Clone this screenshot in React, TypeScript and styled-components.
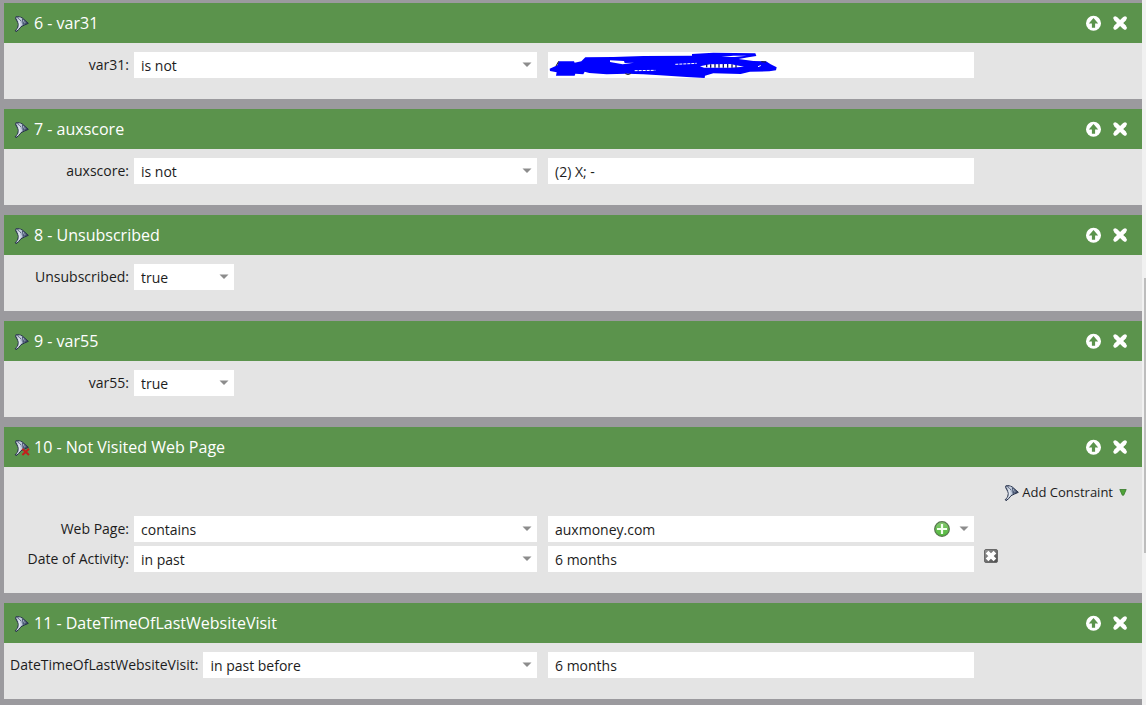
import React, { useId } from 'react';
import styled, { createGlobalStyle } from 'styled-components';

const GlobalStyle = createGlobalStyle`
  *, *::before, *::after { box-sizing: border-box; }
  body {
    margin: 0;
    background: #9b9a9e;
    color: #1c1c1c;
    font-family: 'Open Sans', 'Noto Sans', sans-serif;
    font-size: 14px;
  }
  button, input, select { font: inherit; color: inherit; }
`;

const Page = styled.div`
  display: flex;
  min-height: 100vh;
`;

const FilterList = styled.main`
  flex: 1;
  min-width: 0;
  display: flex;
  flex-direction: column;
  gap: 10px;
  padding: 3px 0 6px 4px;
`;

const ScrollTrack = styled.div`
  width: 4px;
  display: flex;
  flex-direction: column;
  align-items: flex-end;
  background: #f1f1f1;
`;

const TrackSpace = styled.div<{ $share: number }>`
  flex: ${(p) => p.$share} 1 0;
`;

const Thumb = styled.div`
  flex: 275 1 0;
  width: 2px;
  background: #bdbdbd;
`;

const Card = styled.section`
  background: #e4e4e4;
`;

const CardHeader = styled.header`
  display: flex;
  align-items: center;
  gap: 4px;
  height: 40px;
  padding: 0 14px 0 10px;
  background: #5b934c;
  color: #fff;
`;

const CardTitle = styled.h2`
  flex: 1;
  margin: 0;
  font-size: 16px;
  font-weight: 400;
  line-height: 22px;
`;

const CardActions = styled.div`
  display: flex;
  gap: 11px;
`;

const IconButton = styled.button`
  display: flex;
  padding: 0;
  border: 0;
  background: none;
  cursor: pointer;
`;

const RemoveButton = styled(IconButton)`
  align-self: flex-start;
  margin: 3px 0 0 -1px;
`;

const CardBody = styled.div`
  display: flex;
  flex-direction: column;
  gap: 4px;
  padding: 9px 0 21px 6px;
`;

const ConstraintBar = styled.div`
  display: flex;
  justify-content: flex-end;
  height: 36px;
  padding: 6px 15px 0 0;
`;

const ConstraintButton = styled.button`
  display: flex;
  align-items: center;
  gap: 2px;
  height: 20px;
  padding: 0;
  border: 0;
  background: none;
  font-size: 13px;
  line-height: 18px;
  cursor: pointer;

  svg:last-child { margin-left: 4px; }
`;

const Row = styled.div`
  display: flex;
  align-items: center;
  gap: 11px;
`;

const Criterion = styled.div`
  display: flex;
  gap: 5px;
  width: 527px;
`;

const Label = styled.label`
  min-width: 119px;
  line-height: 26px;
  text-align: right;
  white-space: nowrap;
`;

const Overlay = styled.div<{ $width?: number }>`
  display: grid;
  align-items: center;
  height: 26px;
  min-width: 0;
  ${(p) => (p.$width ? `width: ${p.$width}px;` : 'flex: 1;')}

  > * { grid-area: 1 / 1; }
`;

const Select = styled.select`
  appearance: none;
  width: 100%;
  height: 26px;
  padding: 0 20px 0 7px;
  border: 0;
  border-radius: 0;
  background: #fff;
`;

const TextInput = styled.input`
  width: 100%;
  height: 26px;
  padding: 0 7px;
  border: 0;
  background: #fff;
`;

const Adornments = styled.span`
  display: flex;
  align-items: center;
  justify-self: end;
  gap: 9px;
  padding-right: 5px;
  pointer-events: none;

  button { pointer-events: auto; }
`;

const Scribble = styled.svg`
  display: block;
  pointer-events: none;
`;

function FunnelIcon({ negated = false }: { negated?: boolean }) {
  const id = useId();
  return (
    <svg width="16" height="20" viewBox="0 0 48 60" aria-hidden="true">
      <defs>
        <linearGradient id={id} x1="0" y1="0" x2="1" y2="0">
          <stop offset="0" stopColor="#3a465f" />
          <stop offset="0.35" stopColor="#e6edf6" />
          <stop offset="0.6" stopColor="#75849f" />
          <stop offset="1" stopColor="#2a3550" />
        </linearGradient>
      </defs>
      <path
        d="M5 12 C12 9 19 12 25 15 L43 31 C36 35 27 37 21 41 L14 50 L6 56 L4 53 L11 45 L13 34 C12 25 4 21 5 12 Z"
        fill={`url(#${id})`}
        stroke="#26314a"
        strokeWidth="3"
        strokeLinejoin="round"
      />
      <path d="M7 14 C13 20 17 28 16 42 L8 52" fill="none" stroke="#e4eaf4" strokeWidth="3" />
      <path d="M10 13 C16 17 22 23 24 34" fill="none" stroke="#56637f" strokeWidth="3" />
      <path d="M18 15 L34 29 M20 24 L23 37" stroke="#c5d0e0" strokeWidth="4" />
      <path d="M25 18 L29 35 M32 23 L34 33" stroke="#44516d" strokeWidth="3" />
      {negated && <path d="M25 35 L45 54 M45 35 L25 54" stroke="#c2201d" strokeWidth="6" />}
    </svg>
  );
}

function UpIcon() {
  return (
    <svg width="16" height="16" viewBox="0 0 16 16" aria-hidden="true">
      <circle cx="8.5" cy="8.3" r="7.5" fill="#fff" />
      <path d="M8.5 3 L13.2 8.4 H10.1 V12.7 H6.9 V8.4 H3.8 Z" fill="#5b934c" />
    </svg>
  );
}

function CloseIcon() {
  return (
    <svg width="16" height="16" viewBox="0 0 16 16" aria-hidden="true">
      <path d="M3.4 3.4 L12.8 12.6 M12.8 3.4 L3.4 12.6" stroke="#fff" strokeWidth="4.2" strokeLinecap="butt" />
      <path d="M3.2 3.2 L13 12.8 M13 3.2 L3.2 12.8" stroke="#fff" strokeWidth="3.8" strokeLinecap="round" />
    </svg>
  );
}

function Caret() {
  return (
    <svg width="10" height="6" viewBox="0 0 10 6" aria-hidden="true">
      <path d="M0.5 0.5 H9.5 L5 5 Z" fill="#8c8c8c" />
    </svg>
  );
}

function GreenCaret() {
  return (
    <svg width="8" height="7" viewBox="0 0 8 7" aria-hidden="true">
      <path d="M0.8 0.5 H7.2 L4.7 6.2 H3.3 Z" fill="#4fa338" stroke="#36792a" strokeWidth="0.8" />
    </svg>
  );
}

function AddIcon() {
  const id = useId();
  return (
    <svg width="16" height="16" viewBox="0 0 16 16" aria-hidden="true">
      <defs>
        <linearGradient id={id} x1="0" y1="0" x2="0" y2="1">
          <stop offset="0" stopColor="#86c971" />
          <stop offset="1" stopColor="#4fb83a" />
        </linearGradient>
      </defs>
      <circle cx="8" cy="8" r="7.3" fill={`url(#${id})`} stroke="#58784f" strokeWidth="1.3" />
      <path d="M8 3 V13 M3 8 H13" stroke="#f4fff0" strokeWidth="2.2" />
    </svg>
  );
}

function RemoveIcon() {
  const id = useId();
  return (
    <svg width="14" height="14" viewBox="0 0 14 14" aria-hidden="true">
      <defs>
        <linearGradient id={id} x1="0" y1="0" x2="1" y2="1">
          <stop offset="0" stopColor="#9a9a9a" />
          <stop offset="1" stopColor="#484848" />
        </linearGradient>
      </defs>
      <rect x="0.5" y="0.5" width="13" height="13" rx="1.5" fill={`url(#${id})`} stroke="#6a6a6a" />
      <path d="M4.4 4.4 L9.6 9.6 M9.6 4.4 L4.4 9.6" stroke="#fff" strokeWidth="3.8" strokeLinecap="square" />
    </svg>
  );
}

function Redaction() {
  return (
    <Scribble width="230" height="26" viewBox="144 36 690 78" aria-hidden="true">
      <path
        d="M149 86 L172 76 L176 64 L222 64 L224 68 L244 64 L256 52 L340 51 L430 48 L576 47 L576 42 L640 38 L766 40 L769 48 L745 52 L716 57 L760 63 L798 64 L812 73 L830 82 L828 91 L808 94 L750 95 L722 102 L640 100 L615 107 L614 114 L560 111 L480 106 L430 103 L380 101 L320 103 L268 99 L254 95 L250 103 L226 101 L224 107 L168 107 L170 97 L150 93 Z"
        fill="#0000ff"
      />
      <path d="M664 51 L700 47 L740 47 L704 51 Z" fill="#fff" />
      <path d="M330 61 L372 63 L374 69 L402 68 L368 73 L330 66 Z" fill="#fff" />
      <path d="M600 79 L630 73 L690 72 L732 80 L690 83 L612 83 Z" fill="#fff" />
      <path d="M620 73 V82 M632 73 V83 M645 72 V83 M657 72 V83 M670 72 V83 M683 72 V83 M696 73 V83 M708 75 V83" stroke="#101070" strokeWidth="4" />
      <path d="M526 73 L590 70 M404 92 L466 91 M774 80 L784 76" stroke="#fff" strokeWidth="3" strokeDasharray="9 3" fill="none" />
      <path d="M176 64 L168 78 M376 101 Q384 106 392 101 M784 65 L798 66" stroke="#202020" strokeWidth="3" fill="none" />
    </Scribble>
  );
}

type Condition = {
  label: string;
  operator: string;
  value?: string;
  redacted?: boolean;
  picker?: boolean;
  removable?: boolean;
};

type Filter = {
  title: string;
  negated?: boolean;
  constrainable?: boolean;
  conditions: Condition[];
};

const filters: Filter[] = [
  { title: '6 - var31', conditions: [{ label: 'var31', operator: 'is not', value: '', redacted: true }] },
  { title: '7 - auxscore', conditions: [{ label: 'auxscore', operator: 'is not', value: '(2) X; -' }] },
  { title: '8 - Unsubscribed', conditions: [{ label: 'Unsubscribed', operator: 'true' }] },
  { title: '9 - var55', conditions: [{ label: 'var55', operator: 'true' }] },
  {
    title: '10 - Not Visited Web Page',
    negated: true,
    constrainable: true,
    conditions: [
      { label: 'Web Page', operator: 'contains', value: 'auxmoney.com', picker: true },
      { label: 'Date of Activity', operator: 'in past', value: '6 months', removable: true },
    ],
  },
  {
    title: '11 - DateTimeOfLastWebsiteVisit',
    conditions: [{ label: 'DateTimeOfLastWebsiteVisit', operator: 'in past before', value: '6 months' }],
  },
];

function ConditionRow({ label, operator, value, redacted, picker, removable }: Condition) {
  const id = useId();
  const hasValue = value !== undefined;
  return (
    <Row>
      <Criterion>
        <Label htmlFor={id}>{label}:</Label>
        <Overlay $width={hasValue ? undefined : 100}>
          <Select id={id} defaultValue={operator}>
            <option>{operator}</option>
          </Select>
          <Adornments>
            <Caret />
          </Adornments>
        </Overlay>
      </Criterion>
      {hasValue && (
        <Overlay $width={426}>
          <TextInput type="text" aria-label={`${label} value`} defaultValue={value} />
          {redacted && <Redaction />}
          {picker && (
            <Adornments>
              <IconButton type="button" aria-label="Add value">
                <AddIcon />
              </IconButton>
              <Caret />
            </Adornments>
          )}
        </Overlay>
      )}
      {removable && (
        <RemoveButton type="button" aria-label="Remove constraint">
          <RemoveIcon />
        </RemoveButton>
      )}
    </Row>
  );
}

export default function App() {
  return (
    <>
      <GlobalStyle />
      <Page>
        <FilterList>
          {filters.map((filter) => (
            <Card key={filter.title}>
              <CardHeader>
                <FunnelIcon negated={filter.negated} />
                <CardTitle>{filter.title}</CardTitle>
                <CardActions>
                  <IconButton type="button" aria-label="Move up">
                    <UpIcon />
                  </IconButton>
                  <IconButton type="button" aria-label="Remove filter">
                    <CloseIcon />
                  </IconButton>
                </CardActions>
              </CardHeader>
              <CardBody>
                {filter.constrainable && (
                  <ConstraintBar>
                    <ConstraintButton type="button">
                      <FunnelIcon />
                      Add Constraint
                      <GreenCaret />
                    </ConstraintButton>
                  </ConstraintBar>
                )}
                {filter.conditions.map((condition) => (
                  <ConditionRow key={condition.label} {...condition} />
                ))}
              </CardBody>
            </Card>
          ))}
        </FilterList>
        <ScrollTrack aria-hidden="true">
          <TrackSpace $share={278} />
          <Thumb />
          <TrackSpace $share={152} />
        </ScrollTrack>
      </Page>
    </>
  );
}
